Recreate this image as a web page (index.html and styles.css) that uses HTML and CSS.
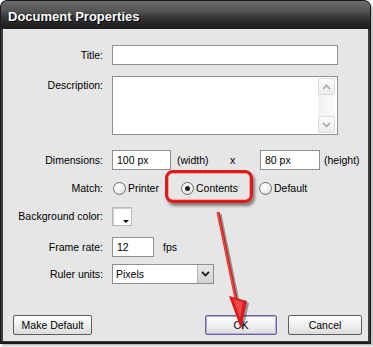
FILE: index.html
```html
<!DOCTYPE html>
<html lang="en">
  <head>
    <meta charset="UTF-8" />
    <meta name="viewport" content="width=device-width, initial-scale=1.0" />
    <title>Document Properties</title>
    <link rel="stylesheet" href="styles.css">
  </head>
  <body>
    <div class="screen">
      <div class="dialog">
        <div class="dialog__titlebar">Document Properties</div>
        <div class="dialog__body">
          <div class="dialog__row">
            <label class="dialog__label">Title:</label>
            <input class="dialog__input dialog__input--title" value="" />
          </div>

          <div class="dialog__row dialog__row--description">
            <label class="dialog__label dialog__label--top">Description:</label>
            <div class="dialog__textarea">
              <div class="dialog__scrollbar">
                <span class="dialog__scroll-btn">
                  <svg width="9" height="6" viewBox="0 0 9 6"><path d="M1 5 L4.5 1.5 L8 5" fill="none" stroke="#a8a8a8" stroke-width="1.6" /></svg>
                </span>
                <span class="dialog__scroll-track"></span>
                <span class="dialog__scroll-btn">
                  <svg width="9" height="6" viewBox="0 0 9 6"><path d="M1 1 L4.5 4.5 L8 1" fill="none" stroke="#a8a8a8" stroke-width="1.6" /></svg>
                </span>
              </div>
            </div>
          </div>

          <div class="dialog__row dialog__row--dimensions">
            <label class="dialog__label">Dimensions:</label>
            <input class="dialog__input dialog__input--width" value="100 px" />
            <span class="dialog__text dialog__text--width">(width)</span>
            <span class="dialog__text dialog__text--times">x</span>
            <input class="dialog__input dialog__input--height" value="80 px" />
            <span class="dialog__text dialog__text--height">(height)</span>
          </div>

          <div class="dialog__row dialog__row--match">
            <label class="dialog__label">Match:</label>
            <span class="dialog__option dialog__option--printer">
              <input type="radio" name="match" class="dialog__radio" />
              <span>Printer</span>
            </span>
            <span class="dialog__option dialog__option--contents">
              <input type="radio" name="match" class="dialog__radio" checked />
              <span>Contents</span>
            </span>
            <span class="dialog__option">
              <input type="radio" name="match" class="dialog__radio" />
              <span>Default</span>
            </span>
          </div>

          <div class="dialog__row dialog__row--color">
            <label class="dialog__label">Background color:</label>
            <span class="dialog__swatch"><span class="dialog__swatch-arrow"></span></span>
          </div>

          <div class="dialog__row dialog__row--frame">
            <label class="dialog__label">Frame rate:</label>
            <input class="dialog__input dialog__input--frame" value="12" />
            <span class="dialog__text dialog__text--fps">fps</span>
          </div>

          <div class="dialog__row dialog__row--ruler">
            <label class="dialog__label">Ruler units:</label>
            <div class="dialog__select">
              <span class="dialog__select-value">Pixels</span>
              <span class="dialog__select-btn">
                <svg width="9" height="6" viewBox="0 0 9 6"><path d="M1 1 L4.5 4.5 L8 1" fill="none" stroke="#222" stroke-width="1.8" /></svg>
              </span>
            </div>
          </div>

          <div class="dialog__footer">
            <button class="dialog__button dialog__button--default">Make Default</button>
            <button class="dialog__button dialog__button--ok">OK</button>
            <button class="dialog__button dialog__button--cancel">Cancel</button>
          </div>
        </div>
      </div>

      <!-- Red callout drawn over the dialog -->
      <div class="callout__box"></div>
      <svg class="callout__arrow" width="373" height="347" viewBox="0 0 373 347">
        <g opacity="0.35" transform="translate(2 2)">
          <line x1="218" y1="212" x2="236" y2="299" stroke="#000" stroke-width="3" />
          <polygon points="229,296 247,301 241,329" fill="#000" />
        </g>
        <line x1="218" y1="212" x2="236" y2="299" stroke="#d81c1c" stroke-width="3" />
        <line x1="217.6" y1="212" x2="235.6" y2="299" stroke="#f05a5a" stroke-width="1" />
        <polygon points="229,296 247,301 241,329" fill="#d81c1c" />
        <polygon points="233,299 243,302 240,318" fill="#ee4646" />
      </svg>
    </div>
  </body>
</html>
```

FILE: styles.css
```css
/* General Styles */
body {
  margin: 0;
  background-color: #fff;
  font-family: "Liberation Sans", Arial, sans-serif;
  font-size: 10.5px;
  color: #000;
}

.screen {
  position: relative;
  width: 373px;
  height: 347px;
}

/* Window Frame */
.dialog {
  width: 371px;
  height: 344px;
  box-sizing: border-box;
  border: 1px solid #1b1b1b;
  border-bottom-width: 2px;
  border-radius: 7px 7px 0 0;
  background-color: #3b3b3b;
  padding: 0 2px 1px;
  box-shadow: 2px 2px 2px rgba(0, 0, 0, 0.25);
}

.dialog__titlebar {
  height: 28px;
  box-sizing: border-box;
  padding: 8px 0 0 5px;
  margin: 0 -2px;
  padding-left: 7px;
  border-radius: 6px 6px 0 0;
  background: linear-gradient(#6c6c6c, #555 35%, #3a3a3a 55%, #262626 80%, #1e1e1e);
  color: #fff;
  font-size: 13px;
  font-weight: bold;
  text-shadow: 1px 1px 0 #000;
}

.dialog__body {
  height: 312px;
  box-sizing: border-box;
  padding-top: 16px;
  background-color: #e6e6e6;
}

/* Rows */
.dialog__row {
  display: flex;
  align-items: center;
  height: 20px;
}

.dialog__label {
  width: 100px;
  flex-shrink: 0;
  margin-right: 9px;
  text-align: right;
}

.dialog__label--top {
  align-self: flex-start;
  padding-top: 3px;
}

.dialog__row--description {
  height: 59px;
  margin-top: 11px;
}

.dialog__row--dimensions {
  margin-top: 15px;
}

.dialog__row--match {
  margin-top: 8px;
}

.dialog__row--color {
  margin-top: 8px;
}

.dialog__row--frame {
  margin-top: 11px;
}

.dialog__row--ruler {
  margin-top: 7px;
}

/* Input Styles */
.dialog__input {
  height: 20px;
  box-sizing: border-box;
  margin: 0;
  padding: 0 4px;
  border: 1px solid #8f8f8f;
  background-color: #fff;
  font: inherit;
  color: #000;
  outline: none;
}

.dialog__input--title {
  width: 226px;
}

.dialog__input--width {
  width: 59px;
}

.dialog__input--height {
  width: 60px;
}

.dialog__input--frame {
  width: 42px;
}

.dialog__text--width {
  width: 53px;
  margin-left: 6px;
}

.dialog__text--times {
  width: 30px;
}

.dialog__text--height {
  margin-left: 4px;
}

.dialog__text--fps {
  margin-left: 9px;
}

/* Description box */
.dialog__textarea {
  width: 226px;
  height: 59px;
  box-sizing: border-box;
  border: 1px solid #8f8f8f;
  background-color: #fff;
  display: flex;
  justify-content: flex-end;
  padding: 1px 2px 1px 0;
}

.dialog__scrollbar {
  width: 17px;
  display: flex;
  flex-flow: column;
  background: linear-gradient(90deg, #f2f2f2, #fafafa);
}

.dialog__scroll-btn {
  height: 17px;
  box-sizing: border-box;
  border: 1px solid #dadada;
  border-radius: 2px;
  background: linear-gradient(#fbfbfb, #ececec);
  display: flex;
  justify-content: center;
  align-items: center;
}

.dialog__scroll-track {
  flex: 1;
}

/* Radio Styles */
.dialog__option {
  display: flex;
  align-items: center;
  gap: 2px;
  padding-left: 1px;
}

.dialog__option--printer {
  width: 67px;
}

.dialog__option--contents {
  width: 77px;
}

.dialog__radio {
  appearance: none;
  width: 13px;
  height: 13px;
  margin: 0;
  border: 1px solid #6f6f6f;
  border-radius: 50%;
  background: radial-gradient(circle at 40% 35%, #fff, #f0f0f0 50%, #cfcfcf);
  display: flex;
  justify-content: center;
  align-items: center;
}

.dialog__radio:checked::after {
  content: "";
  width: 5px;
  height: 5px;
  border-radius: 50%;
  background-color: #1f1f1f;
}

/* Color swatch */
.dialog__swatch {
  position: relative;
  width: 20px;
  height: 19px;
  box-sizing: border-box;
  border: 1px solid #b9b9b9;
  background-color: #fff;
  box-shadow: inset 1px 1px 0 #cfcfcf;
}

.dialog__swatch-arrow {
  position: absolute;
  right: 2px;
  bottom: 2px;
  width: 0;
  height: 0;
  border-left: 3px solid transparent;
  border-right: 3px solid transparent;
  border-top: 3px solid #000;
}

/* Select Styles */
.dialog__select {
  width: 102px;
  height: 20px;
  box-sizing: border-box;
  border: 1px solid #8f8f8f;
  background-color: #fff;
  display: flex;
  align-items: center;
}

.dialog__select-value {
  flex: 1;
  padding-left: 3px;
}

.dialog__select-btn {
  width: 16px;
  height: 18px;
  box-sizing: border-box;
  border-left: 1px solid #b5b5b5;
  background: linear-gradient(#e8e8e8, #d2d2d2);
  display: flex;
  justify-content: center;
  align-items: center;
}

/* Button Styles */
.dialog__footer {
  display: flex;
  align-items: center;
  gap: 11px;
  margin-top: 31px;
  padding: 0 6px 0 10px;
}

.dialog__button {
  height: 20px;
  margin: 0;
  padding: 0;
  border: 1px solid #5e5e5e;
  border-radius: 2px;
  background: linear-gradient(#ffffff, #f2f2f2 45%, #dcdcdc);
  font: inherit;
  color: #000;
  cursor: pointer;
}

.dialog__button--default {
  width: 79px;
}

.dialog__button--ok {
  width: 72px;
  margin-left: auto;
  border-color: #6f62a0;
  box-shadow: inset 0 0 0 1px #b3a8dc;
}

.dialog__button--cancel {
  width: 74px;
}

/* Callout */
.callout__box {
  position: absolute;
  left: 165px;
  top: 170px;
  width: 88px;
  height: 33px;
  box-sizing: border-box;
  border: 3px solid #dc1a1a;
  border-radius: 8px;
  box-shadow: 2px 3px 3px rgba(0, 0, 0, 0.45), inset 0 0 0 1px rgba(255, 120, 120, 0.6);
}

.callout__arrow {
  position: absolute;
  left: 0;
  top: 0;
  pointer-events: none;
}
```
